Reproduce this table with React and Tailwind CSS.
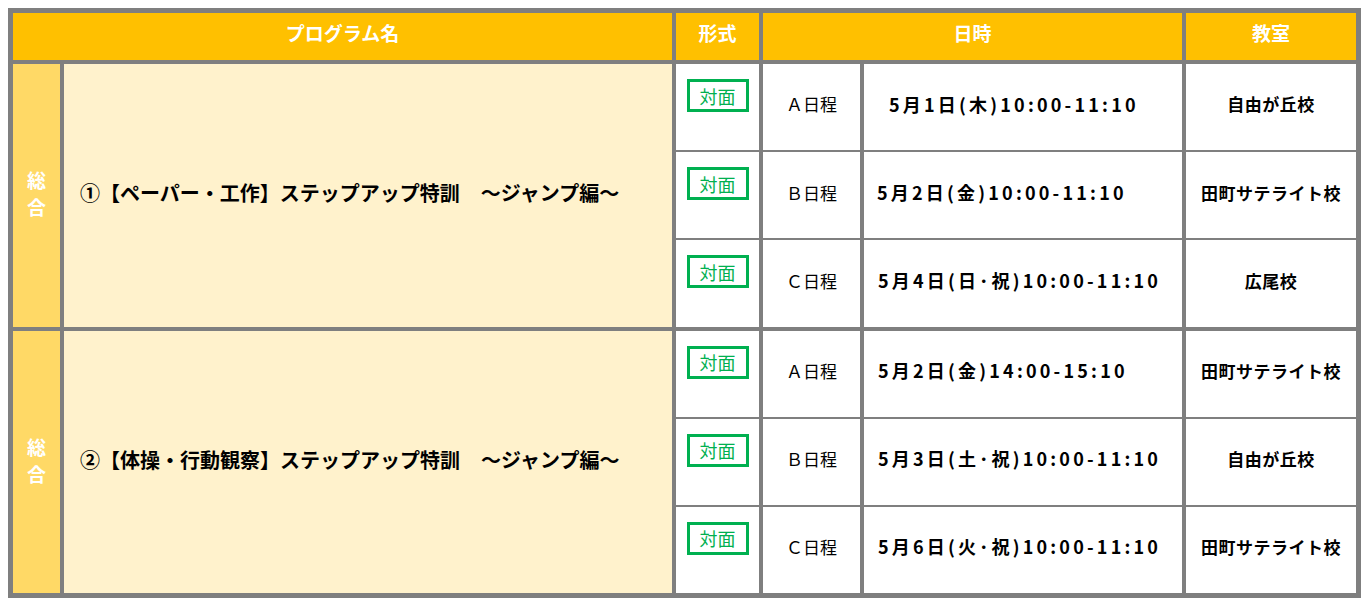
import React from "react";

const F = { fontFamily: '"Noto Sans CJK JP", "Noto Sans", sans-serif' };

const groups = [
  {
    title: "①【ペーパー・工作】ステップアップ特訓",
    rows: [
      { k: "Ａ日程", d: "5月1日(木)10:00-11:10", pl: "pl-[25px]", r: "自由が丘校" },
      { k: "Ｂ日程", d: "5月2日(金)10:00-11:10", pl: "pl-[13px]", r: "田町サテライト校" },
      { k: "Ｃ日程", d: "5月4日(日･祝)10:00-11:10", pl: "pl-[14px]", r: "広尾校" },
    ],
  },
  {
    title: "②【体操・行動観察】ステップアップ特訓",
    rows: [
      { k: "Ａ日程", d: "5月2日(金)14:00-15:10", pl: "pl-[14px]", r: "田町サテライト校" },
      { k: "Ｂ日程", d: "5月3日(土･祝)10:00-11:10", pl: "pl-[14px]", r: "自由が丘校" },
      { k: "Ｃ日程", d: "5月6日(火･祝)10:00-11:10", pl: "pl-[14px]", r: "田町サテライト校" },
    ],
  },
];

function Row({ row }) {
  return (
    <div className="flex flex-1 gap-[4px]">
      <div className="w-[83px] bg-white flex justify-center pt-[15px]">
        <div className="w-[62px] h-[33px] border-[3px] border-[#00b050] text-[#00b050] text-[18px] flex items-center justify-center leading-none">
          対面
        </div>
      </div>
      <div className="w-[97px] bg-white flex items-center justify-center pb-[6px] text-[17px] text-black">
        {row.k}
      </div>
      <div className={`w-[318px] bg-white flex items-center pb-[6px] text-[18px] font-bold text-black tracking-[3.2px] whitespace-nowrap ${row.pl}`}>
        {row.d}
      </div>
      <div className="w-[170px] bg-white flex items-center justify-center pb-[6px] text-[17px] font-bold text-black tracking-[0.5px]">
        {row.r}
      </div>
    </div>
  );
}

function Group({ g }) {
  return (
    <div className="flex gap-[4px] flex-1">
      <div className="w-[47px] bg-[#ffd966] flex flex-col items-center justify-center pb-[4px] text-white font-bold text-[19px] leading-[27px]">
        <span>総</span>
        <span>合</span>
      </div>
      <div className="w-[608px] bg-[#fff2cc] flex items-center pl-[16px] pb-[4px] text-[20px] font-bold text-black whitespace-nowrap">
        {g.title}
        <span className="inline-block w-[21px]"></span>
        ～ジャンプ編～
      </div>
      <div className="w-[680px] flex flex-col gap-[2px]">
        {g.rows.map((r, i) => (
          <Row key={i} row={r} />
        ))}
      </div>
    </div>
  );
}

export default function App() {
  return (
    <div className="w-[1370px] h-[608px] bg-white pt-[8px] pl-[8px]" style={F}>
      <div className="w-[1353px] h-[590px] border-[5px] border-[#7f7f7f] bg-[#7f7f7f] flex flex-col gap-[4px]">
        <div className="flex gap-[4px] h-[47px] text-white font-bold text-[19px]">
          <div className="w-[659px] bg-[#ffc000] flex items-center justify-center pb-[6px]">プログラム名</div>
          <div className="w-[83px] bg-[#ffc000] flex items-center justify-center pb-[6px]">形式</div>
          <div className="w-[419px] bg-[#ffc000] flex items-center justify-center pb-[6px]">日時</div>
          <div className="w-[170px] bg-[#ffc000] flex items-center justify-center pb-[6px]">教室</div>
        </div>
        <div className="flex flex-col gap-[4px] flex-1">
          {groups.map((g, i) => (
            <Group key={i} g={g} />
          ))}
        </div>
      </div>
    </div>
  );
}
